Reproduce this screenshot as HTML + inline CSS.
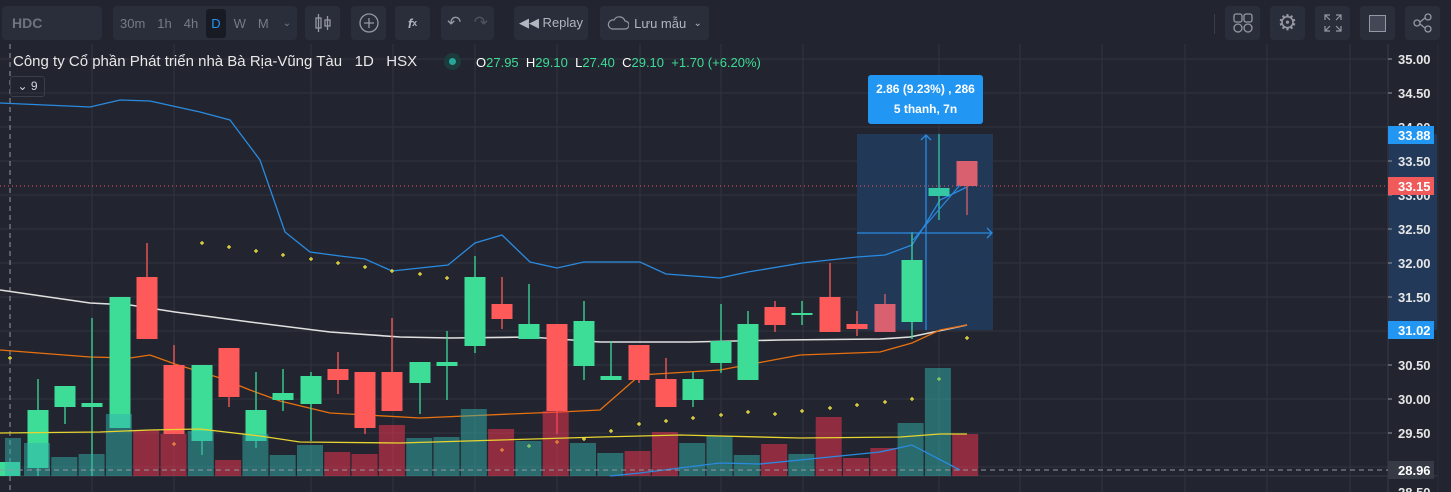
<!DOCTYPE html>
<html><head><meta charset="utf-8"><style>
body{margin:0;width:1451px;height:492px;background:#22252f;overflow:hidden;font-family:"Liberation Sans",sans-serif;position:relative}
.b{position:absolute;top:6px;height:34px;background:#2a2e3b;border-radius:4px;color:#9598a1;font-size:13px;display:flex;align-items:center}
.t{position:absolute;font-size:15px;color:#e8e8e8}
svg{position:absolute;left:0;top:0}
</style></head><body>
<svg id="c" width="1451" height="492"></svg>
<div class="b" style="left:2px;width:100px;color:#6f737d;font-weight:bold;font-size:14px;padding-left:10px;box-sizing:border-box">HDC</div>
<div class="b" style="left:113px;width:184px;font-size:13px">
<span style="margin-left:7px;color:#787b86">30m</span><span style="margin-left:12px;color:#787b86">1h</span><span style="margin-left:12px;color:#787b86">4h</span><span style="margin-left:8px;background:#181b24;color:#2196f3;padding:7px 5px;border-radius:3px">D</span><span style="margin-left:8px;color:#787b86">W</span><span style="margin-left:12px;color:#787b86">M</span><span style="margin-left:14px;color:#787b86;font-size:10px">&#8964;</span></div>
<div class="b" style="left:305px;width:35px;justify-content:center"><svg style="position:static" width="20" height="22"><g stroke="#9598a1" fill="none" stroke-width="1.3"><rect x="3" y="6" width="5" height="10"/><line x1="5.5" y1="2" x2="5.5" y2="20"/><rect x="12" y="8" width="5" height="6"/><line x1="14.5" y1="4" x2="14.5" y2="18"/></g></svg></div>
<div class="b" style="left:351px;width:35px;justify-content:center"><svg style="position:static" width="22" height="22"><circle cx="11" cy="11" r="9" stroke="#9598a1" fill="none" stroke-width="1.3"/><path d="M11 6v10M6 11h10" stroke="#9598a1" stroke-width="1.3"/></svg></div>
<div class="b" style="left:395px;width:35px;justify-content:center;font-style:italic;font-weight:bold;color:#b2b5be">f<span style="font-size:9px;font-style:normal">x</span></div>
<div class="b" style="left:441px;width:53px;justify-content:space-around;font-size:17px"><span>&#8630;</span><span style="color:#50535e">&#8631;</span></div>
<div class="b" style="left:514px;width:74px;justify-content:center;color:#b2b5be;font-size:13px">&#9664;&#9664;&nbsp;Replay</div>
<div class="b" style="left:600px;width:109px;justify-content:center;color:#b2b5be;font-size:13px"><svg style="position:static;margin-right:5px" width="22" height="16"><path d="M5 14h13a4 4 0 0 0 0-8 6 6 0 0 0-11-1 4.5 4.5 0 0 0-2 9z" stroke="#9598a1" fill="none" stroke-width="1.2"/></svg>Lưu mẫu&nbsp;&nbsp;<span style="font-size:10px">&#8964;</span></div>
<div style="position:absolute;left:1214px;top:14px;width:1px;height:20px;background:#3a3e4a"></div>
<div class="b" style="left:1225px;width:35px;justify-content:center"><svg style="position:static" width="22" height="22"><g stroke="#9598a1" fill="none" stroke-width="1.3"><rect x="2" y="2" width="8" height="8" rx="2"/><rect x="12" y="2" width="8" height="8" rx="2"/><circle cx="6" cy="16" r="4"/><circle cx="16" cy="16" r="4"/></g></svg></div>
<div class="b" style="left:1270px;width:35px;justify-content:center;font-size:22px">&#9881;</div>
<div class="b" style="left:1315px;width:35px;justify-content:center"><svg style="position:static" width="20" height="20"><path d="M2 7V2h5M13 2h5v5M18 13v5h-5M7 18H2v-5M2 2l5 5M18 2l-5 5M18 18l-5-5M2 18l5-5" stroke="#9598a1" fill="none" stroke-width="1.2"/></svg></div>
<div class="b" style="left:1360px;width:35px;justify-content:center"><div style="width:15px;height:15px;border:1.5px solid #9598a1;background:#434756"></div></div>
<div class="b" style="left:1405px;width:35px;justify-content:center"><svg style="position:static" width="22" height="22"><g stroke="#9598a1" fill="none" stroke-width="1.3"><circle cx="16" cy="5" r="3"/><circle cx="5" cy="11" r="3"/><circle cx="16" cy="17" r="3"/><path d="M8 10l5-4M8 12l5 4"/></g></svg></div>
<div class="t" style="left:13px;top:53px">Công ty Cổ phần Phát triển nhà Bà Rịa-Vũng Tàu&nbsp;&nbsp;&nbsp;1D&nbsp;&nbsp;&nbsp;HSX</div>
<div style="position:absolute;left:444px;top:53px;width:17px;height:17px;border-radius:50%;background:#1e3b3c"><div style="margin:5px;width:7px;height:7px;border-radius:50%;background:#26a69a"></div></div>
<div class="t" style="left:476px;top:55px;font-size:13px;color:#fff">O<span style="color:#3ddc97">27.95</span>&nbsp; H<span style="color:#3ddc97">29.10</span>&nbsp; L<span style="color:#3ddc97">27.40</span>&nbsp; C<span style="color:#3ddc97">29.10</span>&nbsp; <span style="color:#3ddc97">+1.70 (+6.20%)</span></div>
<div style="position:absolute;left:10px;top:76px;width:33px;height:19px;border:1px solid #3a3e4a;border-radius:3px;color:#d1d4dc;font-size:12px;line-height:19px;text-align:center">&#8964; 9</div>
<div style="position:absolute;left:868px;top:75px;width:115px;height:49px;background:#2196f3;border-radius:3px;color:#fff;font-size:12px;font-weight:bold;text-align:center;line-height:20px;padding-top:4px;box-sizing:border-box">2.86 (9.23%) , 286<br>5 thanh, 7n</div>
<script>
const S=document.getElementById('c');let h='';
const G='#3ddc97',R='#ff5a5a';
[92,174,311,393,475,557,640,721,803,939,1020,1102,1185,1267,1350].forEach(x=>h+=`<line x1="${x}" y1="44" x2="${x}" y2="492" stroke="#31343f"/>`);
for(let y=59;y<476;y+=34)h+=`<line x1="0" y1="${y}" x2="1392" y2="${y}" stroke="#31343f"/>`;
h+=`<line x1="0" y1="476" x2="1437" y2="476" stroke="#363a45"/><line x1="1388" y1="44" x2="1388" y2="492" stroke="#363a45"/><line x1="1438" y1="44" x2="1438" y2="492" stroke="#2a2d37"/>`;
h+=`<line x1="10" y1="44" x2="10" y2="492" stroke="#9598a1" stroke-dasharray="5,4"/>`;
h+=`<rect x="857" y="134" width="136" height="196" fill="#22395a" opacity="0.95"/>`;
const L=(p,c,w)=>h+=`<polyline points="${p}" fill="none" stroke="${c}" stroke-width="${w||1.3}"/>`;
L('0,290 90,303 130,305 175,312 250,322 330,332 400,337 450,338 530,337 600,342 690,342 780,340 880,339 910,337 967,325','#e0e0e0',1.6);
L('0,350 90,357 130,358 150,355 175,364 220,378 250,390 280,401 330,413 420,418 510,414 560,412 600,410 640,375 720,370 800,355 880,352 912,343 940,330 967,325','#e8700f');
L('0,103 90,107 120,100 150,101 200,112 230,120 260,160 285,232 310,252 340,256 365,259 392,271 420,268 448,265 475,243 502,235 530,262 557,268 584,262 640,262 666,274 720,278 748,272 802,263 857,257 885,255 912,245 925,225 940,200 967,187','#2a8ae0');
const C=[[38,410,468,379,476,G],[65,386,407,386,424,G],[92,403,407,318,476,G],[120,297,428,297,428,G],[147,277,339,243,339,R],[174,365,434,345,434,R],[202,365,441,365,455,G],[229,348,397,348,407,R],[256,410,441,372,448,G],[283,393,400,369,411,G],[311,376,404,372,441,G],[338,369,380,352,394,R],[365,372,428,372,434,R],[392,372,411,318,411,R],[420,362,383,362,414,G],[447,362,366,331,400,G],[475,277,346,256,353,G],[502,304,319,277,329,R],[529,324,339,284,339,G],[557,324,411,324,434,R],[584,321,366,301,380,G],[611,376,380,341,380,G],[639,345,380,345,383,R],[666,379,407,358,407,R],[693,379,400,372,407,G],[721,341,363,304,373,G],[748,324,380,311,380,G],[775,307,325,301,332,R],[802,313,315,301,325,G],[830,297,332,263,332,R],[857,324,329,311,336,R],[885,304,332,294,332,'#d9616f'],[912,260,322,232,339,G],[939,188,196,134,220,'#34c9a4'],[967,161,186,161,215,'#d9616f']];
C.forEach(([x,a,b,c,d,col])=>{h+=`<line x1="${x}" y1="${c}" x2="${x}" y2="${d}" stroke="${col}" stroke-width="1.3"/><rect x="${x-10.5}" y="${a}" width="21" height="${Math.max(b-a,2)}" fill="${col}"/>`});
h+=`<rect x="0" y="462" width="20" height="14" fill="#3ddc97"/>`;
const vol=[438,443,457,454,414,430,434,431,460,434,455,445,452,454,425,438,437,409,429,441,411,443,453,451,432,443,436,455,444,454,417,458,448,423,368,434];
const vc='TTTTTRRTRTTTRRRTTTRTRTTRRTTTRTRRRTTR';
vol.forEach((t,i)=>{let x=i==0?5:24+(i-1)*27.3;let w=i==0?16:26;h+=`<rect x="${x}" y="${t}" width="${w}" height="${476-t}" fill="${vc[i]=='T'?'#32b1ad':'#fc3351'}" fill-opacity="0.5"/>`});
L('0,433 100,432 150,430 200,429 260,436 300,442 400,443 600,437 680,435 800,438 900,437 940,434 967,434','#e6d430');
L('610,476 640,473 720,463 760,464 830,457 880,452 912,445 960,470','#2a8ae0');
const P=[[202,243,'#f5e642'],[229,247],[256,251],[283,255],[311,259],[338,263],[365,267],[392,271],[420,274],[447,278],[10,358],[174,444,'#f0883e'],[502,450,'#f0883e'],[529,446,'#8fd16a'],[557,442,'#f0883e'],[584,439],[611,431],[639,424],[666,421],[693,418],[721,415],[748,412],[775,414],[802,411],[830,408],[857,405],[885,402],[912,399],[939,379,'#8fd16a'],[967,338]];
P.forEach(([x,y,c])=>{c=c||'#f5e642';h+=`<path d="M${x-2} ${y}h4M${x} ${y-2}v4" stroke="${c}" stroke-width="1.2"/>`});
h+=`<line x1="857" y1="233" x2="992" y2="233" stroke="#2a8ae0" stroke-width="1.3"/><path d="M987 228l5 5-5 5" stroke="#2a8ae0" fill="none" stroke-width="1.3"/>`;
h+=`<line x1="926" y1="330" x2="926" y2="135" stroke="#2a8ae0" stroke-width="1.3"/><path d="M921 140l5-5 5 5" stroke="#2a8ae0" fill="none" stroke-width="1.3"/>`;
h+=`<line x1="913" y1="240" x2="960" y2="185" stroke="#2a8ae0" stroke-width="1.2"/>`;
h+=`<line x1="0" y1="186" x2="1388" y2="186" stroke="#f05a5a" stroke-dasharray="1,3"/>`;
h+=`<line x1="0" y1="470" x2="1388" y2="470" stroke="#9598a1" stroke-dasharray="5,4"/>`;
h+=`<rect x="1389" y="134" width="48" height="196" fill="#22395a"/>`;
const lab=['35.00','34.50','34.00','33.50','33.00','32.50','32.00','31.50','31.00','30.50','30.00','29.50'];
lab.forEach((t,i)=>{let y=59+i*34;h+=`<line x1="1388" y1="${y}" x2="1392" y2="${y}" stroke="#9598a1"/><text x="1398" y="${y+5}" fill="#e6e6e6" font-size="13" font-weight="bold" font-family="Liberation Sans">${t}</text>`});
const box=(y,c,t)=>h+=`<rect x="1388" y="${y-9}" width="46" height="18" fill="${c}"/><text x="1398" y="${y+5}" fill="#fff" font-size="13" font-weight="bold" font-family="Liberation Sans">${t}</text>`;
box(135,'#2196f3','33.88');box(186,'#f05a5a','33.15');box(330,'#2196f3','31.02');box(470,'#363a45','28.96');
h+=`<text x="1398" y="497" fill="#e6e6e6" font-size="13" font-weight="bold" font-family="Liberation Sans">28.50</text>`;
S.innerHTML=h;
</script>
</body></html>
